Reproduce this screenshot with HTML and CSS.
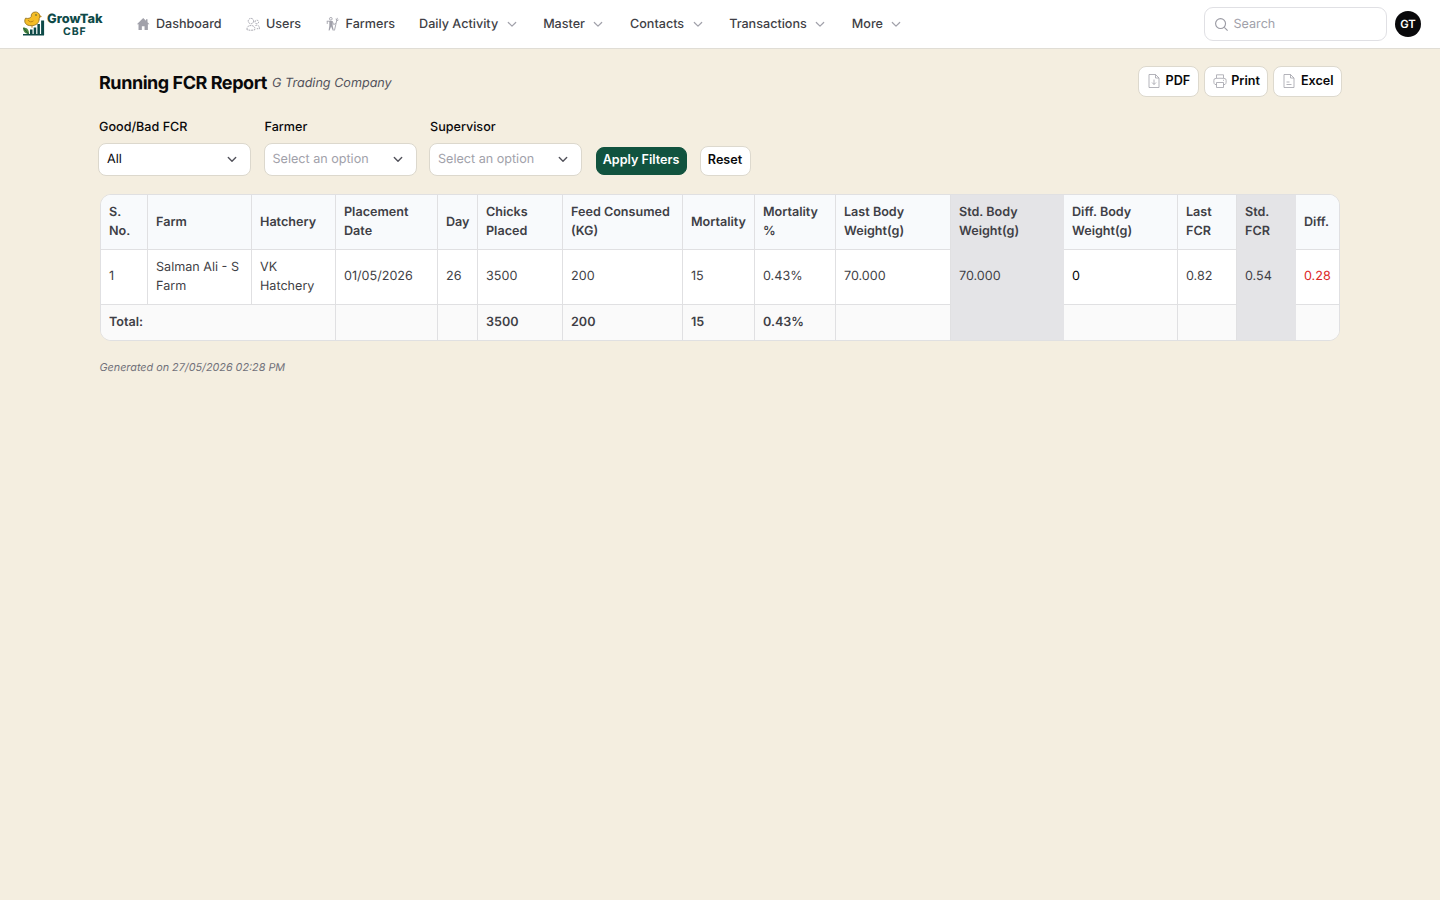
FILE: index.html
```html
<!DOCTYPE html>
<html lang="en">
<head>
    <meta charset="UTF-8">
    <meta name="viewport" content="width=device-width, initial-scale=1.0">
    <title>Running FCR Report</title>
    <link rel="stylesheet" href="styles.css">
</head>
<body>
    <svg width="0" height="0" class="sprite">
        <symbol id="chevron" viewBox="0 0 16 16"><path d="M4.300 6.500L8 10.200l3.700-3.700"/></symbol>
    </svg>

    <header class="navbar">
        <a class="logo" href="#">
            <svg class="logo-mark" viewBox="0 0 24 26">
                <path d="M3.500 7.200C1.300 11.500 4.200 14.700 9 14.700c5.500 0 8.300-3 8.200-7.200C18.800 3.800 16.500 1 13.500 1c-3 0-4.500 2-4.300 4.500C8.500 7.500 6 7.700 3.500 7.200z" fill="#f5bd27" stroke="#8c6a18" stroke-width=".8"/>
                <path d="M6 9c1 2.200 4 2.300 5.500.8M10 14.700v2M17.300 4.500l2 1-2.200.8" fill="none" stroke="#b98216"/>
                <circle cx="14" cy="4" r=".7" fill="#153f3d"/>
                <path d="M8 18.500h2.500V24H8zM11.700 16.500h2.500V24h-2.500zM15.400 13h2.500v11h-2.500zM19.100 9.500h3V24h-3zM1 23h21v1.500H1z" fill="#0e4a48"/>
                <path d="M1 16.500c4 0 6 2 6 6.500C3 23 1 20.500 1 16.500z" fill="#4b8742"/>
                <path d="M1.500 17l5 6" stroke="#164c35" stroke-width=".8"/>
            </svg>
            <span class="logo-text"><span>GrowTak</span><small>CBF</small></span>
        </a>
        <nav class="menu">
            <a class="item" href="#">
                <svg class="icon solid" viewBox="0 0 16 16"><path d="M8 1L1 8h1.800v6.500h3.700v-4.200h3v4.200h3.700V8H15L12.800 5.800V2.500h-1.700v1.600z"/></svg>
                Dashboard
            </a>
            <a class="item" href="#">
                <svg class="icon dashed" viewBox="0 0 16 16"><circle cx="5.500" cy="4.500" r="3"/><circle cx="12" cy="5.500" r="2"/><path d="M1 14c0-3.500 2-4.500 4.500-4.500s4.500 1 4.500 4.500c-2.500 1-6.500 1-9 0zM10.500 9.500c3-1 4.500.5 4.500 3.500h-3"/></svg>
                Users
            </a>
            <a class="item" href="#">
                <svg class="icon farmer" viewBox="0 0 16 16"><circle cx="6.500" cy="2" r="1.500"/><path class="body" d="M4.800 4.500h3.700v5l1.300 5.500H8.600L6.800 10.500 5 15H4l.8-5z"/><path d="M2 4.700h4M2.500 4.700v3M8.200 5l1.500 3.500 2.300-1.500M13.700 1L10.500 15M12 2l1.800 2.300L15 3"/></svg>
                Farmers
            </a>
            <a class="item" href="#">Daily Activity <svg class="chevron"><use href="#chevron"/></svg></a>
            <a class="item" href="#">Master <svg class="chevron"><use href="#chevron"/></svg></a>
            <a class="item" href="#">Contacts <svg class="chevron"><use href="#chevron"/></svg></a>
            <a class="item" href="#">Transactions <svg class="chevron"><use href="#chevron"/></svg></a>
            <a class="item" href="#">More <svg class="chevron"><use href="#chevron"/></svg></a>
        </nav>
        <div class="search">
            <svg class="search-icon" viewBox="0 0 16 16"><circle cx="7" cy="7" r="5.300"/><path d="M11 11l3.500 3.500"/></svg>
            <span>Search</span>
        </div>
        <div class="avatar">GT</div>
    </header>

    <main class="page">
        <div class="page-header">
            <h1>Running FCR Report</h1>
            <em class="company">G Trading Company</em>
            <div class="actions">
                <button class="btn btn-action">
                    <svg class="doc" viewBox="0 0 14 14"><path d="M2 .5h6.500L12 4v9.500H2zM8.500.5V4H12M7 5.500v5M5 8.500l2 2 2-2"/></svg>PDF
                </button>
                <button class="btn btn-action">
                    <svg class="doc" viewBox="0 0 14 14"><path d="M3.500 4V.8h7V4M3.500 10.500H2c-1.200-.5-1.500-3.500-.8-5.500C2 4 12 4 12.800 5c.7 2 .4 5-.8 5.500h-1.500M3.500 8.500h7v5h-7zM10 6.300h1"/></svg>Print
                </button>
                <button class="btn btn-action">
                    <svg class="doc" viewBox="0 0 14 14"><path d="M2 .5h6.500L12 4v9.500H2zM8.500.5V4H12M4.500 8h3M4.500 10.500h5"/></svg>Excel
                </button>
            </div>
        </div>

        <form class="filters">
            <div class="field">
                <label>Good/Bad FCR</label>
                <div class="select">All <svg class="chevron"><use href="#chevron"/></svg></div>
            </div>
            <div class="field">
                <label>Farmer</label>
                <div class="select placeholder">Select an option <svg class="chevron"><use href="#chevron"/></svg></div>
            </div>
            <div class="field">
                <label>Supervisor</label>
                <div class="select placeholder">Select an option <svg class="chevron"><use href="#chevron"/></svg></div>
            </div>
            <button type="button" class="btn btn-primary">Apply Filters</button>
            <button type="button" class="btn btn-reset">Reset</button>
        </form>

        <div class="table-wrap">
            <table class="report">
                <colgroup>
                    <col class="c-no"><col class="c-farm"><col class="c-hatchery"><col class="c-date"><col class="c-day">
                    <col class="c-chicks"><col class="c-feed"><col class="c-mort"><col class="c-mortp"><col class="c-last">
                    <col class="c-std"><col class="c-diffbw"><col class="c-fcr"><col class="c-fcr"><col class="c-diff">
                </colgroup>
                <thead>
                    <tr>
                        <th>S.<br>No.</th>
                        <th class="single">Farm</th>
                        <th class="single">Hatchery</th>
                        <th>Placement<br>Date</th>
                        <th class="single">Day</th>
                        <th>Chicks<br>Placed</th>
                        <th>Feed Consumed<br>(KG)</th>
                        <th class="single">Mortality</th>
                        <th>Mortality<br>%</th>
                        <th>Last Body<br>Weight(g)</th>
                        <th class="std">Std. Body<br>Weight(g)</th>
                        <th>Diff. Body<br>Weight(g)</th>
                        <th>Last<br>FCR</th>
                        <th class="std">Std.<br>FCR</th>
                        <th class="single">Diff.</th>
                    </tr>
                </thead>
                <tbody>
                    <tr>
                        <td>1</td>
                        <td>Salman Ali - S<br>Farm</td>
                        <td>VK<br>Hatchery</td>
                        <td>01/05/2026</td>
                        <td>26</td>
                        <td>3500</td>
                        <td>200</td>
                        <td>15</td>
                        <td>0.43%</td>
                        <td>70.000</td>
                        <td class="std">70.000</td>
                        <td class="neutral">0</td>
                        <td>0.82</td>
                        <td class="std">0.54</td>
                        <td class="bad">0.28</td>
                    </tr>
                </tbody>
                <tfoot>
                    <tr>
                        <td colspan="3">Total:</td>
                        <td></td>
                        <td></td>
                        <td>3500</td>
                        <td>200</td>
                        <td>15</td>
                        <td>0.43%</td>
                        <td></td>
                        <td class="std"></td>
                        <td></td>
                        <td></td>
                        <td class="std"></td>
                        <td></td>
                    </tr>
                </tfoot>
            </table>
        </div>
        <p class="generated">Generated on 27/05/2026 02:28 PM</p>
    </main>
</body>
</html>
```
FILE: styles.css
```css
* {
    box-sizing: border-box;
}

body {
    margin: 0;
    background: #f4eee0;
    color: #09090b;
    font-family: Inter, sans-serif;
    font-size: 12.6px;
    line-height: 19px;
    text-rendering: geometricPrecision;
}

.sprite {
    display: none;
}

svg {
    flex-shrink: 0;
}

/* top navigation */
.navbar {
    display: flex;
    align-items: center;
    height: 49px;
    padding: 0 19px 1px 22px;
    background: #fff;
    border-bottom: 1px solid #e0ddd5;
}

.logo {
    display: flex;
    align-items: center;
    gap: 1px;
    width: 113.5px;
    color: #0e4a48;
    text-decoration: none;
}

.logo-mark {
    width: 24px;
    height: 26px;
}

.logo-text {
    display: flex;
    flex-direction: column;
    align-items: center;
    padding-top: 4px;
    font-size: 12.8px;
    font-weight: 800;
    line-height: 12px;
    white-space: nowrap;
}

.logo-text small {
    font-size: 10.5px;
    font-weight: 700;
    line-height: 11px;
    letter-spacing: 1px;
}

.menu {
    display: flex;
    gap: 24px;
    padding-top: 1px;
}

.item {
    display: flex;
    align-items: center;
    gap: 6px;
    color: #3f3f46;
    font-weight: 500;
    text-decoration: none;
}

.item .chevron {
    margin: 0 -0.5px 0 -0.5px;
}

.icon {
    width: 14.4px;
    height: 14.4px;
    fill: none;
    stroke: #a1a1aa;
    stroke-width: 1;
}

.icon.solid {
    fill: #a1a1aa;
    stroke: none;
}

.icon.dashed {
    stroke-dasharray: 2 0.8;
}

.icon.farmer .body {
    fill: #a1a1aa;
    stroke: none;
}

.chevron {
    width: 16px;
    height: 16px;
    fill: none;
    stroke: #a1a1aa;
    stroke-width: 1.2;
    stroke-linecap: round;
    stroke-linejoin: round;
}

.search {
    display: flex;
    align-items: center;
    gap: 5px;
    width: 183px;
    height: 34px;
    margin-left: auto;
    padding: 1px 9px 0;
    border: 1px solid #e0e0e4;
    border-radius: 9px;
    color: #a1a1aa;
}

.search-icon {
    width: 15px;
    height: 15px;
    margin-left: -0.5px;
    fill: none;
    stroke: #9a9aa3;
    stroke-width: 1.2;
}

.avatar {
    width: 26px;
    height: 26px;
    margin-left: 8px;
    border-radius: 50%;
    background: #09090b;
    color: #fff;
    font-size: 11.3px;
    font-weight: 600;
    line-height: 26px;
    text-align: center;
}

/* page */
.page {
    width: 1242px;
    margin-left: 99px;
    padding-top: 17px;
}

.page-header {
    display: flex;
    align-items: center;
    height: 32px;
}

h1 {
    margin: 3px 5px 0 0;
    font-size: 18px;
    font-weight: 700;
    letter-spacing: -0.45px;
    line-height: 26px;
}

.company {
    margin-top: 2px;
    color: #52525b;
}

.actions {
    display: flex;
    gap: 5px;
    margin: -2px -1px 0 auto;
}

.btn {
    display: flex;
    align-items: center;
    justify-content: center;
    padding: 0 0 3px;
    border: 1px solid #ddd9ce;
    border-radius: 8px;
    background: #fff;
    color: #09090b;
    font-family: inherit;
    font-size: 12.6px;
    font-weight: 600;
    line-height: 19px;
}

.btn-action {
    gap: 4.5px;
    height: 31px;
    padding: 0 7.5px 1px 8px;
}

.doc {
    width: 14px;
    height: 14px;
    fill: none;
    stroke: #a1a1aa;
    stroke-width: 0.8;
}

.filters {
    display: flex;
    align-items: flex-end;
    height: 59px;
    margin: 19px 0 18px -1px;
}

.field {
    width: 153px;
    margin-right: 12.5px;
}

.field label {
    display: block;
    margin: 0 0 6px 1px;
    font-weight: 500;
}

.select {
    display: flex;
    align-items: center;
    justify-content: space-between;
    height: 33px;
    padding: 0 10px 1px 8px;
    border: 1px solid #dcd8cd;
    border-radius: 8px;
    background: #fff;
}

.select.placeholder {
    color: #a1a1aa;
}

.select .chevron {
    stroke: #52525b;
    stroke-width: 1.4;
}

.btn-primary {
    width: 91px;
    height: 28px;
    margin: 0 13px 1px 1px;
    border-color: #11533f;
    background: #11533f;
    color: #fff;
}

.btn-reset {
    width: 51px;
    height: 30px;
}

/* report table */
.table-wrap {
    width: 1240px;
    margin-left: 1px;
    border: 1px solid #e0e0e2;
    border-radius: 11px;
    overflow: hidden;
}

.report {
    width: 1238px;
    table-layout: fixed;
    border-collapse: separate;
    border-spacing: 0;
    background: #fff;
    color: #3f3f46;
}

.report th,
.report td {
    height: 55px;
    padding: 0 0 1px 8px;
    border-right: 1px solid #e0e0e2;
    border-bottom: 1px solid #e0e0e2;
    text-align: left;
    white-space: nowrap;
}

.report th {
    background: #f8fafc;
    font-weight: 600;
}

.report th.single {
    padding: 1px 0 0 8px;
}

.report tfoot td {
    height: 35px;
    border-bottom: 0;
    background: #fafafa;
    font-weight: 600;
}

.report .std,
.report tfoot .std {
    border-color: #e4e4e7;
    background: #e4e4e7;
}

.report th:last-child,
.report td:last-child {
    border-right: 0;
}

.report .neutral {
    color: #000;
}

.report .bad {
    color: #dc2626;
}

.c-no { width: 47px; }
.c-farm { width: 104px; }
.c-hatchery { width: 84px; }
.c-date { width: 102px; }
.c-day { width: 40px; }
.c-chicks { width: 85px; }
.c-feed { width: 120px; }
.c-mort { width: 72px; }
.c-mortp { width: 81px; }
.c-last { width: 115px; }
.c-std { width: 113px; }
.c-diffbw { width: 114px; }
.c-fcr { width: 59px; }
.c-diff { width: 43px; }

.generated {
    margin: 17px 0 0 0.5px;
    color: #71717a;
    font-size: 10.8px;
    font-style: italic;
}
```
